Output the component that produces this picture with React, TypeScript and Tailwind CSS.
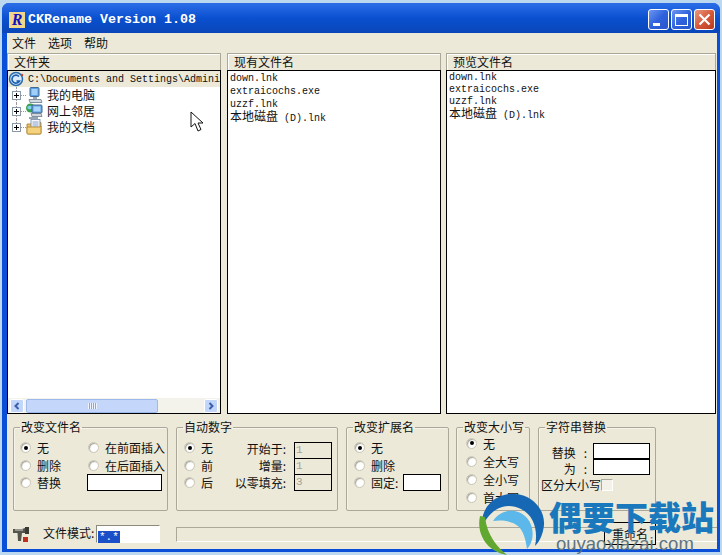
import type { ReactNode } from 'react';

const cjk = "font-['Noto_Sans_CJK_SC','Liberation_Sans',sans-serif]";
const mono = "font-['Liberation_Mono','Noto_Sans_CJK_SC',monospace]";

// ---- small win32 widgets ----

function Radio({ on, label, className = '' }: { on?: boolean; label: ReactNode; className?: string }) {
  return (
    <div className={`flex items-center gap-[6px] ${className}`}>
      <span className="flex h-[11px] w-[11px] shrink-0 items-center justify-center rounded-full border border-[#c9c6b6] bg-white shadow-[inset_1px_1px_1px_#a8a596]">
        {on && <span className="h-[4px] w-[4px] rounded-full bg-black" />}
      </span>
      <span>{label}</span>
    </div>
  );
}

function Group({ title, className, children }: { title: string; className: string; children: ReactNode }) {
  return (
    <fieldset className={`h-[91px] shrink-0 rounded-[2px] border border-[#aca899] shadow-[inset_1px_1px_0_#f6f4ea] ${className}`}>
      <legend className="ml-[6px] px-[1px] text-[12px] leading-[14px] text-[#111]">{title}</legend>
      {children}
    </fieldset>
  );
}

function Panel({ title, className, children }: { title: string; className: string; children: ReactNode }) {
  return (
    <div className={`flex h-full shrink-0 flex-col ${className}`}>
      <div className="h-[17px] shrink-0 border border-b-0 border-[#aca899] pl-[6px] text-[12px] leading-[16px] text-[#111] shadow-[inset_1px_1px_0_#fff]">{title}</div>
      <div className="flex min-h-0 flex-1 flex-col overflow-hidden border border-black bg-white">{children}</div>
    </div>
  );
}

function FileList({ compact }: { compact?: boolean }) {
  const rows = ['down.lnk', 'extraicochs.exe', 'uzzf.lnk'];
  return (
    <div className={`px-[2px] pt-[1px] ${mono} text-[10px] text-[#111]`}>
      {rows.map(r => (
        <div key={r} className={compact ? 'h-[12px] leading-[12px]' : 'h-[13px] leading-[13px]'}>{r}</div>
      ))}
      <div className="-mt-[1px] h-[13px] leading-[12px]">
        <span className={`${cjk} text-[12px]`}>本地磁盘</span> (D).lnk
      </div>
    </div>
  );
}

// ---- tree icons ----

function RootIcon() {
  return (
    <svg width="16" height="16" viewBox="0 0 16 16" className="shrink-0">
      <circle cx="8" cy="8" r="6.5" fill="#d8eaf8" stroke="#2a6cb0" strokeWidth="1.5" />
      <path d="M11 5.5A4 4 0 1 0 11.5 10H8.5" fill="none" stroke="#1c5fb0" strokeWidth="1.6" />
      <circle cx="14" cy="4" r="1.2" fill="#d04030" />
    </svg>
  );
}

function ComputerIcon() {
  return (
    <svg width="17" height="17" viewBox="0 0 17 17" className="shrink-0">
      <rect x="4" y="0.5" width="9" height="9" rx="1" fill="#5aa0e8" stroke="#46688c" />
      <rect x="5.5" y="2" width="6" height="6" fill="#9ed0fa" />
      <path d="M7 10h4v2H7z" fill="#9aa7b5" />
      <path d="M3 12.5h12l1 3H4z" fill="#d3dae2" stroke="#6c7a8a" strokeWidth="0.8" />
    </svg>
  );
}

function NetworkIcon() {
  return (
    <svg width="17" height="17" viewBox="0 0 17 17" className="shrink-0">
      <circle cx="4.5" cy="5" r="4.5" fill="#3aa050" />
      <path d="M1.5 3.5c2-1 4-1 5 1-1 2-3 2.5-5 1z" fill="#7fd0f0" />
      <rect x="6" y="2" width="10" height="8" rx="1" fill="#5aa0e8" stroke="#46688c" />
      <rect x="7.5" y="3.5" width="7" height="5" fill="#a8d6fb" />
      <path d="M5 10.5h10l1 3H6z" fill="#cfd6de" stroke="#6c7a8a" strokeWidth="0.8" />
      <path d="M3 14h9v2H3z" fill="#95a3b2" />
    </svg>
  );
}

function DocsIcon() {
  return (
    <svg width="17" height="16" viewBox="0 0 17 16" className="shrink-0">
      <path d="M1 5h4l1-1.5h9V14a1 1 0 0 1-1 1H2a1 1 0 0 1-1-1z" fill="#f0c25c" stroke="#a87f2c" strokeWidth="0.8" />
      <rect x="5" y="0.5" width="9" height="10" fill="#f6f8fc" stroke="#6f85a5" strokeWidth="0.8" />
      <path d="M6.5 3h6M6.5 5h6M6.5 7h6" stroke="#6a8cc0" strokeWidth="0.8" />
      <path d="M1 8h13l1-1v7a1 1 0 0 1-1 1H2a1 1 0 0 1-1-1z" fill="#f5d27c" stroke="#a87f2c" strokeWidth="0.8" />
    </svg>
  );
}

function TreeRow({ icon, label, last }: { icon: ReactNode; label: string; last?: boolean }) {
  return (
    <div className="relative flex h-[16px] items-center pl-[4px]">
      <span className={`absolute left-[8px] top-0 w-0 border-l border-dotted border-[#999] ${last ? 'h-[8px]' : 'h-[16px]'}`} />
      <span className="relative flex h-[9px] w-[9px] shrink-0 items-center justify-center border border-[#8a9aa8] bg-white">
        <span className="absolute h-[1px] w-[5px] bg-black" />
        <span className="absolute h-[5px] w-[1px] bg-black" />
      </span>
      <span className="w-[5px] border-t border-dotted border-[#999]" />
      {icon}
      <span className="ml-[4px] text-[12px] leading-[16px] text-[#111]">{label}</span>
    </div>
  );
}

function ScrollButton({ dir }: { dir: 'l' | 'r' }) {
  return (
    <div className="flex h-[14px] w-[14px] shrink-0 items-center justify-center rounded-[2px] border border-white bg-[#c2d5fb]">
      <svg width="8" height="8" viewBox="0 0 8 8">
        <path d={dir === 'l' ? 'M5.5 1 2.5 4l3 3' : 'M2.5 1l3 3-3 3'} fill="none" stroke="#3b5fae" strokeWidth="2" />
      </svg>
    </div>
  );
}

function TitleButton({ kind }: { kind: 'min' | 'max' | 'close' }) {
  const bg = kind === 'close'
    ? 'bg-gradient-to-br from-[#e69a80] via-[#d8593a] to-[#b8381c]'
    : 'bg-gradient-to-br from-[#6e96f0] via-[#2f62de] to-[#2a56c8]';
  return (
    <div className={`relative flex h-[21px] w-[21px] items-center justify-center rounded-[3px] border border-white ${bg}`}>
      {kind === 'min' && <span className="absolute bottom-[3px] left-[4px] h-[3px] w-[7px] bg-white" />}
      {kind === 'max' && (
        <span className="h-[12px] w-[13px] border border-t-[3px] border-white" />
      )}
      {kind === 'close' && (
        <svg width="13" height="13" viewBox="0 0 13 13">
          <path d="M1.5 1.5l10 10M11.5 1.5l-10 10" stroke="#fff" strokeWidth="2.2" />
        </svg>
      )}
    </div>
  );
}

function NumberBox({ value, className = '' }: { value: string; className?: string }) {
  return <div className={`h-[17px] border border-black bg-[#ece9d8] pl-[1px] ${mono} text-[11px] leading-[15px] text-[#a5a296] ${className}`}>{value}</div>;
}

// ---- page ----

export default function App() {
  return (
    <div className={`relative h-[555px] w-[722px] overflow-hidden bg-[#bcd8f0] pl-[2px] pr-[2px] pt-[3px] ${cjk}`}>
      <div className="flex h-[549px] flex-col rounded-t-[7px] bg-[#0a4fd8] pb-[3px] pl-[5px] pr-[3px]">
        {/* Title bar */}
        <div className="-ml-[5px] -mr-[3px] flex h-[30px] shrink-0 items-center rounded-t-[7px] bg-gradient-to-b from-[#2a6ee8] via-[#0a50d0] to-[#0a46b8] pl-[7px] pr-[5px] pt-[3px]">
          <div className="flex h-[16px] w-[16px] items-center justify-center bg-[#f2d68c]">
            <span className="font-['Liberation_Serif',serif] text-[16px] font-bold italic leading-[16px] text-[#1010c0]">R</span>
          </div>
          <span className={`ml-[3px] ${mono} text-[13.33px] font-bold text-white`}>CKRename Version 1.08</span>
          <div className="ml-auto flex gap-[2px]">
            <TitleButton kind="min" />
            <TitleButton kind="max" />
            <TitleButton kind="close" />
          </div>
        </div>

        {/* Client area */}
        <div className="flex min-h-0 flex-1 flex-col bg-[#ece9d8]">
          <div className="flex h-[20px] shrink-0 items-center gap-[12px] pl-[5px] text-[12px] text-[#111]">
            <span>文件</span>
            <span>选项</span>
            <span>帮助</span>
          </div>

          <div className="flex h-[361px] shrink-0 pr-[1px]">
            <Panel title="文件夹" className="w-[214px]">
              <div className="flex h-[16px] shrink-0 items-center bg-[#ece9d8]">
                <RootIcon />
                <span className={`ml-[4px] whitespace-nowrap ${mono} text-[10px] text-[#111]`}>C:\Documents and Settings\Admini</span>
              </div>
              <TreeRow icon={<ComputerIcon />} label="我的电脑" />
              <TreeRow icon={<NetworkIcon />} label="网上邻居" />
              <TreeRow icon={<DocsIcon />} label="我的文档" last />
              <div className="flex-1" />
              <div className="flex h-[15px] shrink-0 items-center bg-[#f3f3ec] pl-[2px] pr-[2px]">
                <ScrollButton dir="l" />
                <div className="ml-[2px] flex h-[14px] w-[132px] items-center justify-center rounded-[2px] border border-[#9db8ec] bg-[#c4d7fb]">
                  <span className="h-[6px] w-[9px] bg-[repeating-linear-gradient(90deg,#eef3ff_0,#eef3ff_1px,#8aa6dc_1px,#8aa6dc_2px)]" />
                </div>
                <div className="flex-1" />
                <ScrollButton dir="r" />
              </div>
            </Panel>
            <Panel title="现有文件名" className="ml-[6px] w-[214px]">
              <FileList />
            </Panel>
            <Panel title="预览文件名" className="ml-[5px] w-[270px]">
              <FileList compact />
            </Panel>
          </div>

          {/* Option groups */}
          <div className="mt-[6px] flex h-[92px] shrink-0 items-start text-[12px] text-[#111]">
            <Group title="改变文件名" className="ml-[6px] w-[155px]">
              <div className="grid grid-cols-[68px_1fr] pl-[6px] pt-[5px] leading-[17px]">
                <Radio on label="无" className="h-[17.5px]" />
                <Radio label="在前面插入" className="h-[17.5px]" />
                <Radio label="删除" className="h-[17.5px]" />
                <Radio label="在后面插入" className="h-[17.5px]" />
                <Radio label="替换" className="h-[17.5px]" />
                <div className="-ml-[1px] h-[17px] w-[75px] border border-black bg-white" />
              </div>
            </Group>
            <Group title="自动数字" className="ml-[8px] w-[162px]">
              <div className="flex pl-[7px] pt-[5px] leading-[17px]">
                <div className="w-[52px]">
                  <Radio on label="无" className="h-[17.5px]" />
                  <Radio label="前" className="h-[17.5px]" />
                  <Radio label="后" className="h-[17.5px]" />
                </div>
                <div className="w-[50px] whitespace-nowrap pt-[1px] text-right [direction:rtl]">
                  <div className="h-[17px]">:开始于</div>
                  <div className="h-[17px]">:增量</div>
                  <div className="h-[17px]">:以零填充</div>
                </div>
                <div className="ml-[8px] mt-[3px] w-[38px]">
                  <NumberBox value="1" />
                  <NumberBox value="1" className="-mt-[1px]" />
                  <NumberBox value="3" className="-mt-[1px]" />
                </div>
              </div>
            </Group>
            <Group title="改变扩展名" className="ml-[8px] w-[103px]">
              <div className="pl-[7px] pt-[5px] leading-[17px]">
                <Radio on label="无" className="h-[17.5px]" />
                <Radio label="删除" className="h-[17.5px]" />
                <div className="flex h-[17.5px] items-center">
                  <Radio label="固定:" />
                  <div className="ml-[5px] h-[17px] w-[38px] border border-black bg-white" />
                </div>
              </div>
            </Group>
            <Group title="改变大小写" className="ml-[7px] w-[74px]">
              <div className="pl-[9px] leading-[17px]">
                <Radio on label="无" className="h-[18px]" />
                <Radio label="全大写" className="h-[18px]" />
                <Radio label="全小写" className="h-[18px]" />
                <Radio label="首大写" className="h-[18px]" />
              </div>
            </Group>
            <Group title="字符串替换" className="ml-[8px] w-[118px]">
              <div className="pl-[2px] pt-[9px] leading-[16px]">
                <div className="flex h-[16px] justify-end pr-[5px]">
                  <span className="mr-[8px] pt-[2px]">替换</span>
                  <span className="mr-[6px] pt-[2px]">:</span>
                  <div className="h-[16px] w-[57px] border border-black bg-white" />
                </div>
                <div className="flex h-[16px] justify-end pr-[5px]">
                  <span className="mr-[8px] pt-[2px]">为</span>
                  <span className="mr-[6px] pt-[2px]">:</span>
                  <div className="h-[16px] w-[57px] border border-black bg-white" />
                </div>
                <div className="mt-[2px] flex items-center">
                  <span>区分大小写</span>
                  <span className="h-[12px] w-[12px] border border-[#aca899] border-b-white border-r-white bg-[#f4f2e8]" />
                </div>
              </div>
            </Group>
          </div>

          {/* Status row */}
          <div className="mt-[10px] flex h-[24px] shrink-0 items-center text-[12px] text-[#111]">
            <svg width="17" height="16" viewBox="0 0 17 16" className="ml-[6px] shrink-0">
              <path d="M0 3h9l3-1v5H9L8 15H5L4.5 7H0z" fill="#55554e" />
              <path d="M2 4h8" stroke="#d8d8d0" />
              <rect x="12" y="1" width="4" height="7" fill="#3a3a34" />
              <rect x="10" y="11" width="5" height="5" fill="#c03020" />
            </svg>
            <span className="ml-[13px] w-[53px] shrink-0 -translate-y-[1px]">文件模式:</span>
            <div className="h-[18px] w-[64px] shrink-0 border border-[#8c8a7c] border-b-white border-r-white bg-white pl-[1px]">
              <span className={`bg-[#1a4fc8] px-[1px] ${mono} text-[11px] leading-[15px] text-white`}>*.*</span>
            </div>
            <div className="ml-[16px] h-[15px] min-w-0 flex-1 border border-[#aca899] border-b-white border-r-0" />
            <button className="absolute left-[604px] top-[522px] h-[23px] w-[52px] border border-black bg-[#ece9d8] text-[12px] leading-[20px] text-[#111]">重命名</button>
          </div>
        </div>
      </div>

      {/* Mouse pointer */}
      <svg width="14" height="22" viewBox="0 0 14 22" className="absolute left-[190px] top-[111px]">
        <path d="M1 1v15l4-3.5L8 20l3-1.5-3-6.5h5z" fill="#fff" stroke="#111" strokeWidth="1" />
      </svg>

      {/* Watermark */}
      <svg width="70" height="64" viewBox="0 0 70 64" className="absolute left-[477px] top-[492px]">
        <path d="M5 35C3 14 20 1 38 2c18 1 30 16 29 31-1 9-4 16-9 21 3-14 0-30-14-37C30 10 14 15 5 35z" fill="#1668b4" />
        <path d="M16 29c8-12 24-14 34-3 8 9 7 24 0 31-2-14-5-22-14-26-8-3-14-3-20-2z" fill="#5cb8ea" />
        <path d="M3 24C-1 42 10 60 30 63c-10-8-20-20-22-38z" fill="#62a830" />
      </svg>
      <div className="absolute left-[549px] top-[494px] whitespace-nowrap text-[33px] font-black leading-[44px] text-[#1a78bc]">偶要下载站</div>
      <div className="absolute left-[556px] top-[533px] whitespace-nowrap font-['Liberation_Sans',sans-serif] text-[18.5px] leading-[22px] text-[#5f7482]">ouyaoxiazai.com</div>
    </div>
  );
}
